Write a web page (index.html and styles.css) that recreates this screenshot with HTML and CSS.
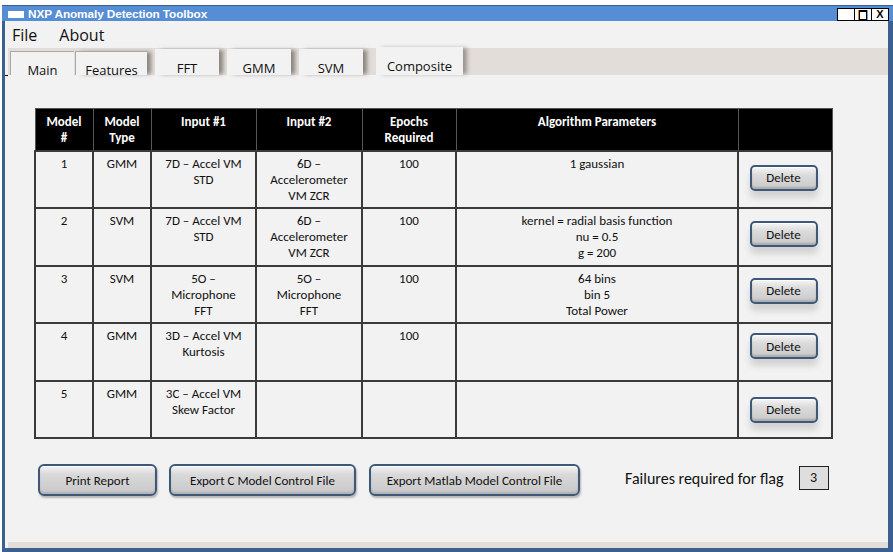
FILE: index.html
```html
<!DOCTYPE html>
<html>
<head>
<meta charset="utf-8">
<link rel="stylesheet" href="styles.css">
</head>
<body>
<div class="window">
  <div class="titlebar">
    <span class="appicon"></span>
    <span class="title">NXP Anomaly Detection Toolbox</span>
    <div class="controls">
      <span class="ctl ctl-min">_</span>
      <span class="ctl ctl-max"><span class="maxbox"></span></span>
      <span class="ctl ctl-close">X</span>
    </div>
  </div>
  <div class="frame">
    <div class="menubar">
      <span class="menu-item">File</span>
      <span class="menu-item">About</span>
    </div>
    <div class="tabs">
      <div class="tab tab-main">Main</div>
      <div class="tab tab-features">Features</div>
      <div class="tab tab-fft">FFT</div>
      <div class="tab tab-gmm">GMM</div>
      <div class="tab tab-svm">SVM</div>
      <div class="tab tab-composite">Composite</div>
    </div>
    <div class="content">
      <table class="models">
        <colgroup>
          <col class="c1"><col class="c2"><col class="c3"><col class="c4"><col class="c5"><col class="c6"><col class="c7">
        </colgroup>
        <thead>
          <tr>
            <th>Model<br>#</th>
            <th>Model<br>Type</th>
            <th>Input #1</th>
            <th>Input #2</th>
            <th>Epochs<br>Required</th>
            <th>Algorithm Parameters</th>
            <th></th>
          </tr>
        </thead>
        <tbody>
          <tr class="r1">
            <td>1</td><td>GMM</td><td>7D – Accel VM<br>STD</td><td>6D –<br>Accelerometer<br>VM ZCR</td><td>100</td><td>1 gaussian</td>
            <td class="act"><button class="del">Delete</button></td>
          </tr>
          <tr class="r2">
            <td>2</td><td>SVM</td><td>7D – Accel VM<br>STD</td><td>6D –<br>Accelerometer<br>VM ZCR</td><td>100</td><td>kernel = radial basis function<br>nu = 0.5<br>g = 200</td>
            <td class="act"><button class="del">Delete</button></td>
          </tr>
          <tr class="r3">
            <td>3</td><td>SVM</td><td>5O –<br>Microphone<br>FFT</td><td>5O –<br>Microphone<br>FFT</td><td>100</td><td>64 bins<br>bin 5<br>Total Power</td>
            <td class="act"><button class="del">Delete</button></td>
          </tr>
          <tr class="r4">
            <td>4</td><td>GMM</td><td>3D – Accel VM<br>Kurtosis</td><td></td><td>100</td><td></td>
            <td class="act"><button class="del">Delete</button></td>
          </tr>
          <tr class="r5">
            <td>5</td><td>GMM</td><td>3C – Accel VM<br>Skew Factor</td><td></td><td></td><td></td>
            <td class="act"><button class="del">Delete</button></td>
          </tr>
        </tbody>
      </table>
      <div class="actions">
        <button class="btn btn-print">Print Report</button>
        <button class="btn btn-c">Export C Model Control File</button>
        <button class="btn btn-matlab">Export Matlab Model Control File</button>
        <span class="flag-label">Failures required for flag</span>
        <span class="flag-box">3</span>
      </div>
    </div>
    <div class="strip"></div>
  </div>
</div>
</body>
</html>
```

FILE: styles.css
```css
html, body {
  margin: 0;
  padding: 0;
  background: #ffffff;
}
body {
  font-family: "Carlito", "Lato", "Liberation Sans", sans-serif;
  color: #111;
}
.window {
  margin: 5px 0 0 2px;
  width: 891px;
  height: 547px;
  display: flex;
  flex-direction: column;
}
.titlebar {
  height: 15px;
  border-top: 1px solid #3b5f8e;
  background: #558ed5;
  display: flex;
  align-items: center;
  position: relative;
}
.appicon {
  width: 16px;
  height: 7px;
  background: #ffffff;
  margin-left: 6px;
  margin-top: 1px;
}
.title {
  margin-left: 4px;
  color: #ffffff;
  font-family: "Liberation Sans", Arial, sans-serif;
  font-weight: bold;
  font-size: 11.8px;
  letter-spacing: -0.1px;
}
.controls {
  margin-left: auto;
  margin-right: 4px;
  display: flex;
  margin-top: 2px;
}
.ctl {
  width: 16px;
  height: 11px;
  border: 1px solid #000;
  margin-left: -1px;
  background: #ffffff;
  font-family: "Liberation Sans", Arial, sans-serif;
  font-weight: bold;
  font-size: 11px;
  line-height: 11px;
  text-align: center;
  color: #000;
  display: flex;
  justify-content: center;
  align-items: flex-end;
}
.ctl-min {
  line-height: 9px;
  color: #300;
}
.ctl-max {
  align-items: center;
}
.maxbox {
  width: 6px;
  height: 7px;
  border: 1px solid #000;
  border-top-width: 2px;
  box-shadow: -1px 0 0 #e08a2a, 1px 0 0 #6aa0e0;
}
.frame {
  flex: 1;
  display: flex;
  flex-direction: column;
  border-left: 3px solid #3b5f8e;
  border-right: 5px solid #3b5f8e;
  border-bottom: 4px solid #3b5f8e;
  background: #f2f2f2;
}
.menubar {
  height: 26px;
  display: flex;
  align-items: center;
  padding-left: 7px;
  gap: 22px;
  font-family: "Open Sans", sans-serif;
  font-size: 16px;
  color: #111;
}
.menu-item {
  padding-top: 1px;
}
.tabs {
  height: 28px;
  margin-left: 3px;
  padding-left: 2px;
  display: flex;
  align-items: flex-end;
  background: linear-gradient(#f2f2f2 0, #f2f2f2 1px, #e2ddd9 1px);
  position: relative;
}
.tab {
  background: #f2f2f2;
  box-sizing: border-box;
  text-align: center;
  font-family: "Open Sans", sans-serif;
  font-size: 13px;
  line-height: 16px;
  padding-top: 11px;
  color: #111;
  position: relative;
}
.tab-main {
  width: 64px;
  height: 24px;
  border-top: 1px solid #a9a9a9;
  border-left: 1px solid #a9a9a9;
  padding-top: 10px;
}
.tab-features {
  width: 72px;
  height: 24px;
  margin-left: 1px;
  border-top: 1px solid #a9a9a9;
  border-left: 1px solid #a9a9a9;
  padding-top: 10px;
  box-shadow: 5px 0 4px -1px rgba(70, 60, 55, 0.55);
}
.tab-fft, .tab-gmm, .tab-svm {
  width: 64px;
  height: 26px;
  margin-left: 8px;
  box-shadow: 5px 0 4px -1px rgba(70, 60, 55, 0.55);
}
.tab-composite {
  width: 87px;
  height: 28px;
  margin-left: 13px;
  box-shadow: 5px 0 4px -1px rgba(70, 60, 55, 0.45);
}
.tabs::before {
  content: "";
  position: absolute;
  left: -3px;
  bottom: -1px;
  width: 3px;
  height: 1px;
  background: #000;
}
.content {
  flex: 1;
  padding: 33px 0 0 29px;
}
.models {
  border-collapse: collapse;
  table-layout: fixed;
  width: 797px;
  font-size: 13px;
}
.c1 { width: 58px; }
.c2 { width: 58px; }
.c3 { width: 105px; }
.c4 { width: 106px; }
.c5 { width: 94px; }
.c6 { width: 282px; }
.c7 { width: 94px; }
.models th {
  background: #000;
  color: #fff;
  font-weight: bold;
  height: 42px;
  box-sizing: border-box;
  vertical-align: top;
  padding: 5px 2px 0;
  line-height: 16px;
  text-align: center;
  border-left: 1px solid #555;
  border-right: 1px solid #555;
  border-top: 1px solid #555;
}
.models td {
  border: 2px solid #3a3a3a;
  vertical-align: top;
  text-align: center;
  padding: 4px 2px 0;
  line-height: 16px;
  height: 57.6px;
  box-sizing: border-box;
  color: #111;
}
.models td.act {
  vertical-align: top;
  padding: 0;
}
.r1 td.act { padding-top: 13px; }
.r2 td.act { padding-top: 12px; }
.r3 td.act { padding-top: 11px; }
.r4 td.act { padding-top: 9px; }
.r5 td.act { padding-top: 15px; }
.del {
  width: 68px;
  height: 26px;
  margin-left: -3px;
  border: 2px solid #3d5878;
  border-radius: 5px;
  background: linear-gradient(#f6f6f6 0, #dcdcdc 35%, #c9c9c9 100%);
  box-shadow: inset 0 1px 0 #ffffff, inset 0 -2px 2px rgba(0,0,0,0.15), 0 7px 6px rgba(0,0,0,0.13);
  font-family: "Carlito", "Lato", sans-serif;
  font-size: 13px;
  color: #111;
  padding: 0;
}
.actions {
  display: flex;
  align-items: center;
  margin-top: 25px;
  margin-left: 4px;
}
.btn {
  height: 32px;
  border: 2px solid #3d5878;
  border-radius: 6px;
  background: linear-gradient(#f4f4f4 0, #d9d9d9 30%, #c8c8c8 100%);
  box-shadow: inset 0 1px 0 #ffffff, inset 0 -2px 2px rgba(0,0,0,0.12), 1px 2px 2px rgba(0,0,0,0.25);
  font-family: "Carlito", "Lato", sans-serif;
  font-size: 13px;
  color: #111;
  padding: 0;
}
.btn-print { width: 119px; }
.btn-c { width: 187px; margin-left: 12px; }
.btn-matlab { width: 211px; margin-left: 13px; }
.flag-label {
  margin-left: 45px;
  font-size: 16px;
  color: #111;
  margin-top: -3px;
}
.flag-box {
  margin-left: 15px;
  width: 30px;
  height: 24px;
  box-sizing: border-box;
  border: 1px solid #222;
  background: #dedede;
  text-align: center;
  line-height: 22px;
  font-size: 14px;
  margin-top: -5px;
}
.strip {
  height: 6px;
  margin-left: 3px;
  background: #e2ddd9;
}
```
